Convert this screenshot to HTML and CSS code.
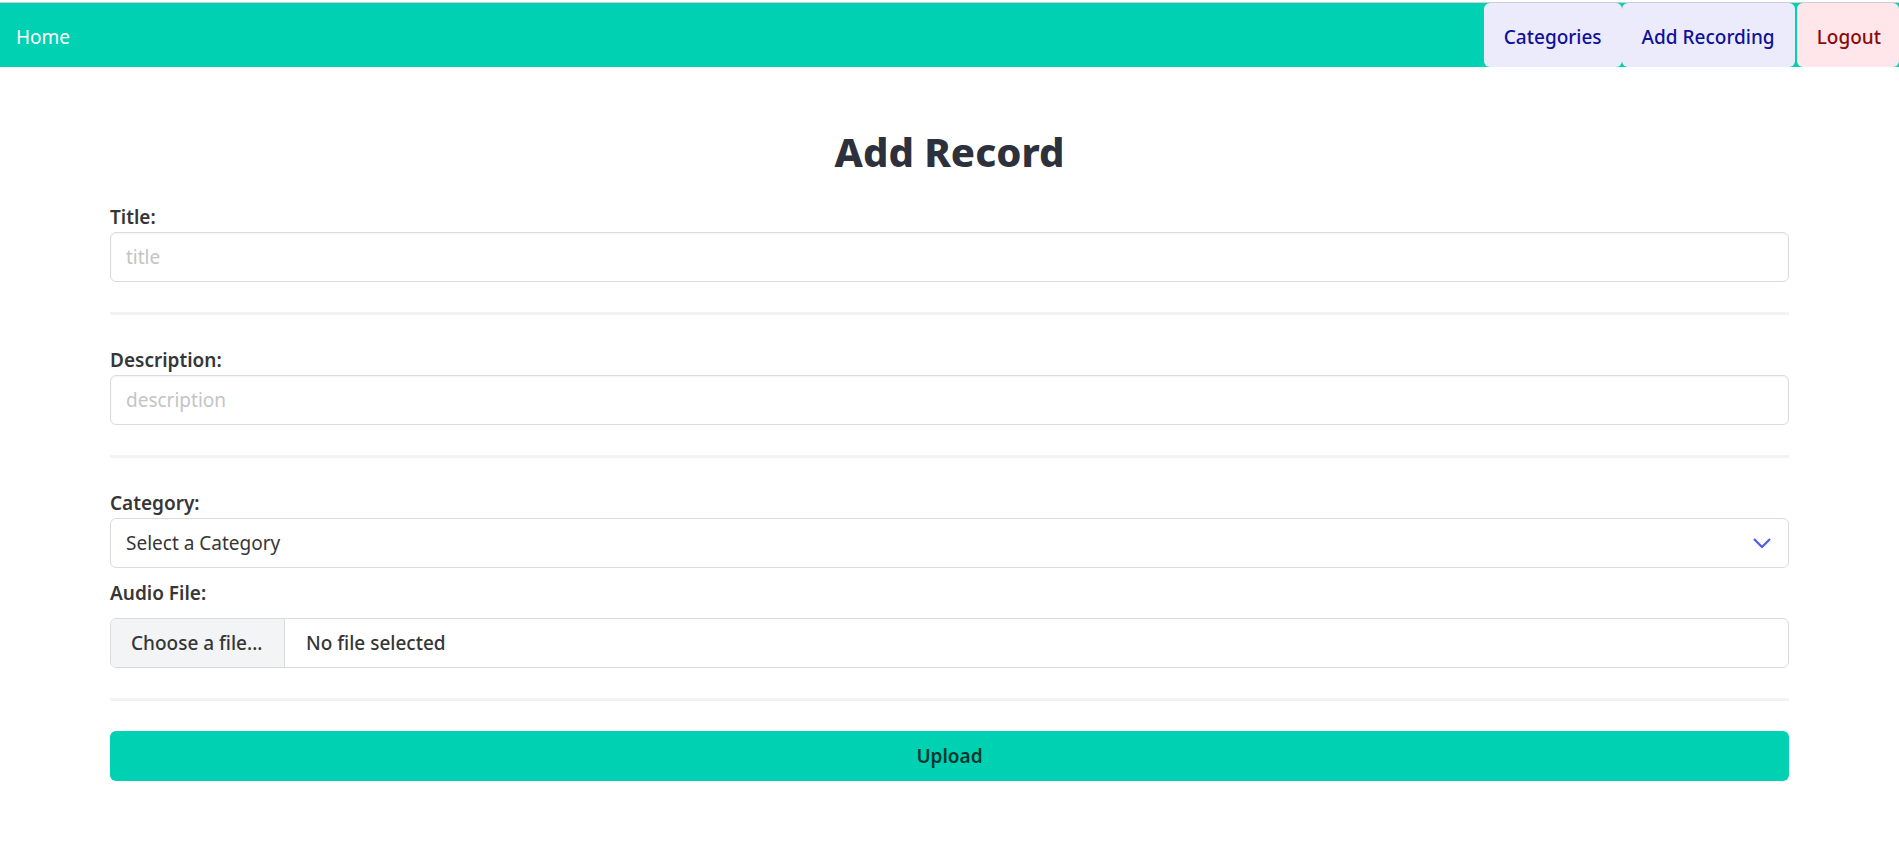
FILE: index.html
```html
<!DOCTYPE html>
<html lang="en">
<head>
<meta charset="utf-8">
<title>Add Record</title>
<link rel="stylesheet" href="styles.css">
</head>
<body>
<nav class="navbar">
  <a class="nav-home" href="#">Home</a>
  <div class="nav-end">
    <a class="nav-btn nav-link" href="#">Categories</a>
    <a class="nav-btn nav-link" href="#">Add Recording</a>
    <a class="nav-btn nav-logout" href="#">Logout</a>
  </div>
</nav>
<main class="container">
  <h1 class="title">Add Record</h1>
  <form class="form">
    <div class="field">
      <label class="label">Title:</label>
      <input class="input" type="text" placeholder="title">
    </div>
    <hr class="divider">
    <div class="field">
      <label class="label">Description:</label>
      <input class="input" type="text" placeholder="description">
    </div>
    <hr class="divider">
    <div class="field">
      <label class="label">Category:</label>
      <div class="select">
        <span class="select-text">Select a Category</span>
        <svg class="chevron" width="20" height="12" viewBox="0 0 20 12"><path d="M2 2 L10 10 L18 2" fill="none" stroke="#4a5cf0" stroke-width="2.2"/></svg>
      </div>
    </div>
    <div class="field field-file">
      <label class="label label-file">Audio File:</label>
      <div class="file">
        <span class="file-cta">Choose a file...</span>
        <span class="file-name">No file selected</span>
      </div>
    </div>
    <hr class="divider">
    <button class="upload" type="button">Upload</button>
  </form>
</main>
</body>
</html>
```
FILE: styles.css
```css
* { box-sizing: border-box; }
body {
  margin: 0;
  padding-top: 2px;
  font-family: "Noto Sans", "Open Sans", sans-serif;
  color: #363636;
  background: #fff;
}
a { text-decoration: none; }

.navbar {
  display: flex;
  justify-content: space-between;
  align-items: stretch;
  height: 65px;
  border-top: 1px solid #cfcfcf;
  background: #00d1b2;
}
.nav-home {
  display: flex;
  align-items: center;
  padding: 4px 16px 0;
  color: #fff;
  font-size: 19px;
}
.nav-end {
  display: flex;
  align-items: stretch;
}
.nav-btn {
  display: flex;
  align-items: center;
  padding: 4px 20px 0;
  border-radius: 6px;
  font-size: 19px;
  font-weight: 500;
}
.nav-link {
  background: #ebebfb;
  color: #10109c;
}
.nav-logout {
  margin-left: 2px;
  padding-right: 18px;
  background: #ffe6ea;
  color: #8b0a0a;
}

.container {
  width: 1679px;
  margin: 0 auto;
}
.title {
  margin: 0 0 26px;
  padding-top: 61px;
  text-align: center;
  font-size: 40px;
  line-height: 48px;
  font-weight: 800;
  color: #2d313b;
}
.form {
  display: flex;
  flex-direction: column;
}
.field {
  display: flex;
  flex-direction: column;
}
.field-file { margin-top: 10px; }
.label {
  font-size: 19px;
  line-height: 30px;
  font-weight: 600;
  color: #363636;
}
.label-file { margin-bottom: 10px; }
.input {
  height: 50px;
  padding: 0 15px;
  border: 1px solid #dbdbdb;
  border-radius: 6px;
  box-shadow: inset 0 1px 2px rgba(10,10,10,0.05);
  font-family: inherit;
  font-size: 19px;
  color: #363636;
  outline: none;
}
.input::placeholder { color: #c4c4c4; }
.divider {
  height: 3px;
  margin: 30px 0;
  border: 0;
  background: #f3f3f4;
}
.select {
  display: flex;
  align-items: center;
  justify-content: space-between;
  height: 50px;
  padding: 0 16px 0 15px;
  border: 1px solid #dbdbdb;
  border-radius: 6px;
  font-size: 19px;
  color: #363636;
}
.chevron { display: block; }
.file {
  display: flex;
  height: 50px;
  border: 1px solid #dbdbdb;
  border-radius: 6px;
  overflow: hidden;
  font-size: 19px;
  font-weight: 500;
  color: #363636;
}
.file-cta {
  display: flex;
  align-items: center;
  width: 174px;
  padding-left: 20px;
  background: #f3f4f6;
  border-right: 1px solid #dbdbdb;
}
.file-name {
  display: flex;
  align-items: center;
  padding-left: 21px;
}
.upload {
  height: 50px;
  border: 0;
  border-radius: 6px;
  background: #00d1b2;
  font-family: inherit;
  font-size: 19px;
  font-weight: 600;
  color: rgba(0,0,0,0.75);
}
```
